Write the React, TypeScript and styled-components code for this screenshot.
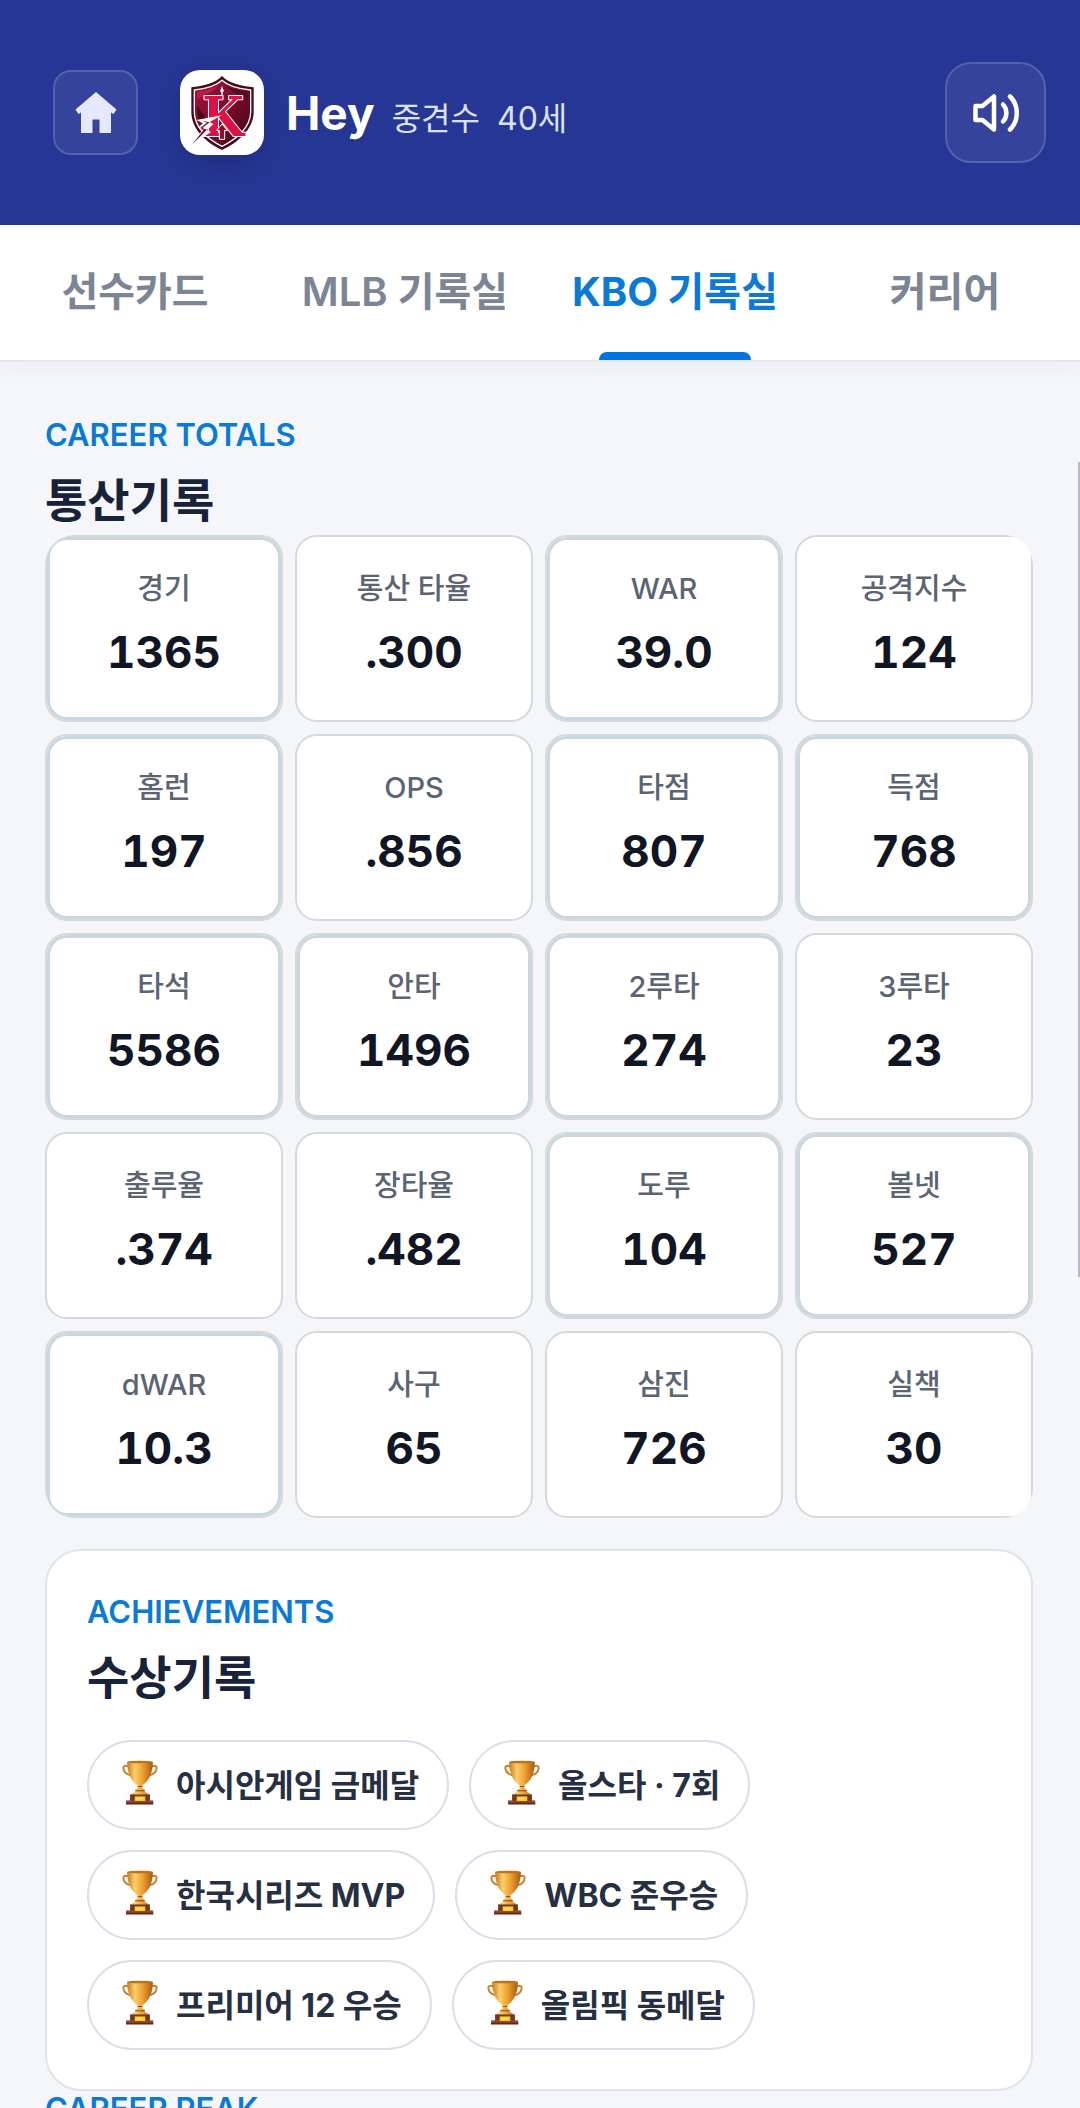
import { useState } from 'react';
import styled, { createGlobalStyle } from 'styled-components';

const GlobalStyle = createGlobalStyle`
  * {
    box-sizing: border-box;
  }

  body {
    margin: 0;
    background: #f4f6fa;
    font-family: Inter, 'Noto Sans CJK KR', sans-serif;
  }

  button {
    font-family: inherit;
    cursor: pointer;
  }
`;

const Page = styled.div`
  display: flex;
  flex-direction: column;
  height: 100vh;
  overflow: hidden;
`;

const Header = styled.header`
  display: flex;
  align-items: center;
  flex-shrink: 0;
  padding: 62px 34px 62px 53px;
  background: #263694;
`;

const IconButton = styled.button<{ $size: number; $radius: number }>`
  display: flex;
  align-items: center;
  justify-content: center;
  width: ${({ $size }) => $size}px;
  height: ${({ $size }) => $size}px;
  padding: 0;
  color: #ffffff;
  background: #36439b;
  border: 2px solid #5561aa;
  border-radius: ${({ $radius }) => $radius}px;
`;

const TeamBadge = styled.div`
  width: 84px;
  height: 85px;
  margin-left: 42px;
  background: #ffffff;
  border-radius: 20px;
  box-shadow: 0 8px 24px rgba(15, 23, 60, 0.25);

  svg {
    display: block;
    width: 100%;
    height: 100%;
  }
`;

const Player = styled.div`
  display: flex;
  align-items: baseline;
  flex: 1;
  gap: 17px;
  margin-left: 22px;
  color: #dbe1fb;
  font-size: 32px;
`;

const PlayerName = styled.h1`
  margin: 0;
  color: #ffffff;
  font-size: 46px;
  font-weight: 700;
  line-height: 60px;
`;

const Tabs = styled.nav`
  position: relative;
  z-index: 1;
  display: grid;
  grid-template-columns: repeat(4, 1fr);
  flex-shrink: 0;
  background: #ffffff;
  border-bottom: 2px solid #e3e7ec;
  box-shadow: 0 4px 24px rgba(30, 41, 80, 0.05);
`;

const Tab = styled.button<{ $active: boolean }>`
  position: relative;
  height: 135px;
  padding: 0 0 8px;
  color: ${({ $active }) => ($active ? '#0b7ad6' : '#7c8594')};
  background: none;
  border: 0;
  font-size: 40px;
  font-weight: ${({ $active }) => ($active ? 700 : 600)};
  white-space: nowrap;

  &::after {
    content: '';
    position: absolute;
    bottom: 0;
    left: 22%;
    right: 22%;
    height: 8px;
    border-radius: 8px 8px 0 0;
    background: ${({ $active }) => ($active ? '#0074e0' : 'transparent')};
  }
`;

const Content = styled.main`
  position: relative;
  flex: 1;
  min-height: 0;
  padding: 55px 47px 0 45px;
  overflow: hidden;
`;

const ScrollThumb = styled.div`
  position: absolute;
  top: 100px;
  right: 0;
  width: 2px;
  height: 815px;
  background: #b3bcc8;
`;

const Eyebrow = styled.p`
  margin: 0;
  color: #0b7ad6;
  font-size: 31px;
  font-weight: 600;
  line-height: 36px;
`;

const Title = styled.h2`
  margin: 12px 0 0;
  color: #18233a;
  font-size: 46px;
  font-weight: 700;
  line-height: 70px;
`;

const StatGrid = styled.dl`
  display: grid;
  grid-template-columns: repeat(4, 1fr);
  gap: 12px;
  margin: 0;
  border-radius: 30px;
  overflow: hidden;
`;

const StatCard = styled.div<{ $ranked: boolean }>`
  display: flex;
  flex-direction: column;
  align-items: center;
  gap: 17px;
  padding: 32px 0 42px;
  background: #ffffff;
  border: 2px solid #d5d9d7;
  border-radius: 22px;
  box-shadow: ${({ $ranked }) => ($ranked ? 'inset 0 0 0 3px #c8d7e1' : 'none')};
`;

const StatLabel = styled.dt`
  color: #5b6473;
  font-size: 29px;
  font-weight: 500;
  line-height: 40px;
`;

const StatValue = styled.dd`
  margin: 0;
  color: #111624;
  font-size: 44px;
  font-weight: 700;
  font-variant-numeric: tabular-nums;
  line-height: 52px;
`;

const AwardsCard = styled.section`
  margin-top: 31px;
  padding: 43px 40px 39px;
  background: #ffffff;
  border: 2px solid #dfe4ea;
  border-radius: 36px;
`;

const AwardList = styled.ul`
  display: flex;
  flex-wrap: wrap;
  gap: 20px;
  margin: 28px 0 0;
  padding: 0;
  list-style: none;
`;

const Award = styled.li`
  display: flex;
  align-items: center;
  gap: 17px;
  height: 90px;
  padding: 0 28px 5px 32px;
  color: #263042;
  border: 2px solid #d9e0e9;
  border-radius: 45px;
  font-size: 32px;
  font-weight: 700;
  white-space: nowrap;
`;

function HomeIcon() {
  return (
    <svg width='44' height='44' viewBox='0 0 44 44' fill='#e6e9fd' aria-hidden='true'>
      <path d='M22 1 42.500 18.500 39.500 23 37 21.500V42H25.500V28.500H18.500V42H7V21.500L4.500 23 1.500 18.500Z' />
    </svg>
  );
}

function SoundIcon() {
  return (
    <svg
      width='48'
      height='40'
      viewBox='0 0 48 40'
      fill='none'
      stroke='currentColor'
      strokeWidth='4.500'
      strokeLinecap='round'
      strokeLinejoin='round'
      aria-hidden='true'
    >
      <path d='M3.500 13H10.500L22 3.500V36.500L10.500 27H3.500Z' />
      <path d='M31 11.500C35.500 16 35.500 24 31 28.500' />
      <path d='M38 3.500C47 12 47 28 38 36.500' />
    </svg>
  );
}

function TeamLogo() {
  return (
    <svg viewBox='61 60 252 255' role='img' aria-label='팀 로고'>
      <defs>
        <linearGradient id='shield' x1='0' y1='0' x2='1' y2='1'>
          <stop offset='0' stopColor='#a51238' />
          <stop offset='0.5' stopColor='#7a0c2a' />
          <stop offset='1' stopColor='#3c0616' />
        </linearGradient>
      </defs>
      <path
        d='M187 78C170 98 130 108 95 112V186C95 238 140 278 187 300C234 278 282 238 282 186V112C245 108 204 98 187 78Z'
        fill='#4c0819'
      />
      <path
        d='M187 91C169 108 136 117 104 120V186C104 232 144 268 187 289C230 268 273 232 273 186V120C238 117 205 108 187 91Z'
        fill='url(#shield)'
        stroke='#ffffff'
        strokeWidth='4'
      />
      <path d='M187 100 156 124 132 136 112 150V126C140 122 168 114 187 100Z' fill='#c11a43' />
      <path d='M187 100 218 124 248 138 265 158V126C236 122 206 114 187 100Z' fill='#5a0920' />
      <path d='M113 168 138 205 118 215C114 202 113 188 113 168Z' fill='#420616' />
      <path d='M187 107 190 117 193 123 189 127V137H185V127L181 123 184 117Z' fill='#ffffff' />
      <text
        x='190'
        y='259'
        textAnchor='middle'
        fontFamily='"DejaVu Serif Condensed", "DejaVu Serif", serif'
        fontSize='160'
        fontWeight='700'
        fill='#dc1247'
        stroke='#ffffff'
        strokeWidth='6'
        strokeLinejoin='round'
        paintOrder='stroke'
      >
        K
      </text>
      <path d='M187 222 203 241H195V268H179V241H171Z' fill='#8c0d30' stroke='#ffffff' strokeWidth='3' />
      <path
        d='M186 196 110 210 130 220 116 232 130 238 95 286 154 246 142 240 162 222 150 216Z'
        fill='#ffffff'
      />
      <path d='M150 217 128 234 142 239 97 284 132 239 122 233 142 218 126 212Z' fill='#7a0c2a' />
    </svg>
  );
}

function TrophyIcon() {
  return (
    <svg width='38' height='45' viewBox='122 92 114 136' aria-hidden='true'>
      <defs>
        <linearGradient id='cup' x1='0' y1='0' x2='1' y2='0'>
          <stop offset='0' stopColor='#c9791a' />
          <stop offset='0.3' stopColor='#fbcf6c' />
          <stop offset='0.6' stopColor='#efa030' />
          <stop offset='1' stopColor='#a95a10' />
        </linearGradient>
      </defs>
      <g fill='none' stroke='#c8822a' strokeWidth='6'>
        <path d='M144 111C132 107 127 111 129 119C131 130 140 136 151 138' />
        <path d='M214 111C226 107 231 111 229 119C227 130 218 136 207 138' />
      </g>
      <path
        d='M140 98C141 133 151 155 172 168V177L165 183V188L150 197H208L193 188V183L186 177V168C207 155 217 133 218 98Z'
        fill='url(#cup)'
      />
      <ellipse cx='179' cy='98' rx='39' ry='4' fill='#b77418' />
      <path d='M172 172H186M164 185H194' stroke='#8d4a10' strokeWidth='3' />
      <path d='M149 196H209V216H149Z' fill='#74351f' />
      <path d='M137 214H219V226H137Z' fill='#8b4a32' />
      <path d='M137 221H219V226H137Z' fill='#64281a' />
      <path d='M163 202H195V216H163Z' fill='#f3cc2a' />
      <path d='M168 206H187V211H168Z' fill='#ffe862' />
    </svg>
  );
}

const tabs = ['선수카드', 'MLB 기록실', 'KBO 기록실', '커리어'];

const stats = [
  { label: '경기', value: '1365', ranked: true },
  { label: '통산 타율', value: '.300', ranked: false },
  { label: 'WAR', value: '39.0', ranked: true },
  { label: '공격지수', value: '124', ranked: false },
  { label: '홈런', value: '197', ranked: true },
  { label: 'OPS', value: '.856', ranked: false },
  { label: '타점', value: '807', ranked: true },
  { label: '득점', value: '768', ranked: true },
  { label: '타석', value: '5586', ranked: true },
  { label: '안타', value: '1496', ranked: true },
  { label: '2루타', value: '274', ranked: true },
  { label: '3루타', value: '23', ranked: false },
  { label: '출루율', value: '.374', ranked: false },
  { label: '장타율', value: '.482', ranked: false },
  { label: '도루', value: '104', ranked: true },
  { label: '볼넷', value: '527', ranked: true },
  { label: 'dWAR', value: '10.3', ranked: true },
  { label: '사구', value: '65', ranked: false },
  { label: '삼진', value: '726', ranked: false },
  { label: '실책', value: '30', ranked: false },
];

const awards = [
  '아시안게임 금메달',
  '올스타 · 7회',
  '한국시리즈 MVP',
  'WBC 준우승',
  '프리미어 12 우승',
  '올림픽 동메달',
];

export default function App() {
  const [activeTab, setActiveTab] = useState('KBO 기록실');

  return (
    <Page>
      <GlobalStyle />
      <Header>
        <IconButton $size={85} $radius={18} aria-label='홈'>
          <HomeIcon />
        </IconButton>
        <TeamBadge>
          <TeamLogo />
        </TeamBadge>
        <Player>
          <PlayerName>Hey</PlayerName>
          <span>중견수</span>
          <span>40세</span>
        </Player>
        <IconButton $size={101} $radius={26} aria-label='소리'>
          <SoundIcon />
        </IconButton>
      </Header>
      <Tabs>
        {tabs.map((tab) => (
          <Tab key={tab} $active={tab === activeTab} onClick={() => setActiveTab(tab)}>
            {tab}
          </Tab>
        ))}
      </Tabs>
      <Content>
        <section>
          <Eyebrow>CAREER TOTALS</Eyebrow>
          <Title>통산기록</Title>
          <StatGrid>
            {stats.map(({ label, value, ranked }) => (
              <StatCard key={label} $ranked={ranked}>
                <StatLabel>{label}</StatLabel>
                <StatValue>{value}</StatValue>
              </StatCard>
            ))}
          </StatGrid>
        </section>
        <AwardsCard>
          <Eyebrow>ACHIEVEMENTS</Eyebrow>
          <Title>수상기록</Title>
          <AwardList>
            {awards.map((award) => (
              <Award key={award}>
                <TrophyIcon />
                {award}
              </Award>
            ))}
          </AwardList>
        </AwardsCard>
        <Eyebrow>CAREER PEAK</Eyebrow>
        <ScrollThumb />
      </Content>
    </Page>
  );
}
